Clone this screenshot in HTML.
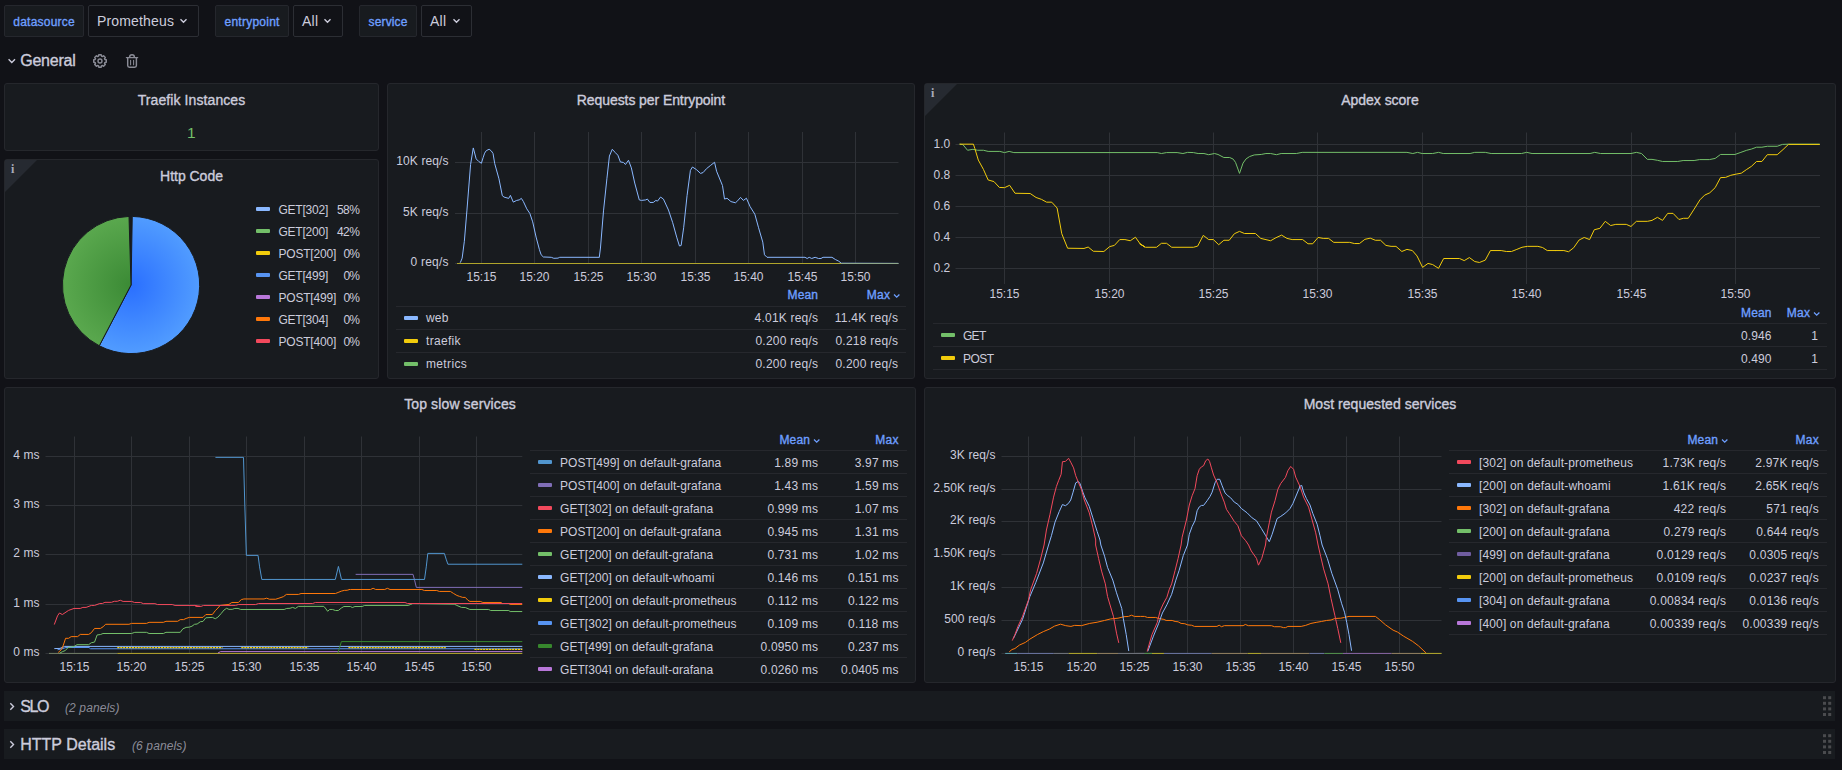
<!DOCTYPE html>
<html lang="en"><head><meta charset="utf-8"><title>Traefik</title><style>
html,body{margin:0;padding:0;background:#111217;}
body{width:1842px;height:770px;position:relative;overflow:hidden;font-family:"Liberation Sans",sans-serif;color:rgb(204,204,220);font-size:12px;}
.t{position:absolute;white-space:pre;}
.p{position:absolute;background:#181b1f;border:1px solid #25272c;border-radius:3px;box-sizing:border-box;}
.b{position:absolute;box-sizing:border-box;}
svg{position:absolute;left:0;top:0;}
</style></head><body>
<div class="b" style="left:4px;top:5px;width:80px;height:32px;background:#181b1f;border:1px solid #25272d;border-radius:2px"></div>
<div class="b" style="left:88px;top:5px;width:111px;height:32px;background:#111217;border:1px solid #2c2e34;border-radius:2px"></div>
<svg width="1842" height="770"><path d="M180.5 19.3 l3 3 l3 -3" fill="none" stroke="rgb(204,204,220)" stroke-width="1.4"/></svg>
<div class="b" style="left:215px;top:5px;width:74px;height:32px;background:#181b1f;border:1px solid #25272d;border-radius:2px"></div>
<div class="b" style="left:293px;top:5px;width:50px;height:32px;background:#111217;border:1px solid #2c2e34;border-radius:2px"></div>
<svg width="1842" height="770"><path d="M324.5 19.3 l3 3 l3 -3" fill="none" stroke="rgb(204,204,220)" stroke-width="1.4"/></svg>
<div class="b" style="left:359px;top:5px;width:58px;height:32px;background:#181b1f;border:1px solid #25272d;border-radius:2px"></div>
<div class="b" style="left:421px;top:5px;width:51px;height:32px;background:#111217;border:1px solid #2c2e34;border-radius:2px"></div>
<svg width="1842" height="770"><path d="M453.5 19.3 l3 3 l3 -3" fill="none" stroke="rgb(204,204,220)" stroke-width="1.4"/></svg>
<svg width="1842" height="770"><path d="M8.6 59.3 l3.2 3.2 l3.2 -3.2" fill="none" stroke="rgb(204,204,220)" stroke-width="1.4"/></svg>
<svg width="1842" height="770"><path d="M98.80 54.76 L101.20 54.76 L101.39 55.99 L102.56 56.48 L103.56 55.74 L105.26 57.44 L104.52 58.44 L105.01 59.61 L106.24 59.80 L106.24 62.20 L105.01 62.39 L104.52 63.56 L105.26 64.56 L103.56 66.26 L102.56 65.52 L101.39 66.01 L101.20 67.24 L98.80 67.24 L98.61 66.01 L97.44 65.52 L96.44 66.26 L94.74 64.56 L95.48 63.56 L94.99 62.39 L93.76 62.20 L93.76 59.80 L94.99 59.61 L95.48 58.44 L94.74 57.44 L96.44 55.74 L97.44 56.48 L98.61 55.99Z" fill="none" stroke="#8a8b96" stroke-width="1.5" stroke-linejoin="round"/><circle cx="100.0" cy="61.0" r="2.0" fill="none" stroke="#8a8b96" stroke-width="1.4"/><g fill="none" stroke="#8a8b96" stroke-width="1.45" stroke-linecap="round" stroke-linejoin="round"><path d="M126.5 57.6 H137.6"/><path d="M129.6 57.3 Q129.6 54.7 132 54.7 Q134.4 54.7 134.4 57.3"/><path d="M127.7 57.8 V65.6 Q127.7 67.3 129.4 67.3 H134.7 Q136.4 67.3 136.4 65.6 V57.8"/><path d="M130.6 60.3 V64.7 M133.6 60.3 V64.7" stroke-width="1.05"/></g></svg>
<div class="p" style="left:4px;top:83px;width:375px;height:68px"></div>
<div class="p" style="left:4px;top:159px;width:375px;height:220px"></div>
<svg width="1842" height="770"><path d="M5 160 h32 l-32 32 z" fill="#262a31"/></svg>
<div class="p" style="left:387px;top:83px;width:528px;height:296px"></div>
<div class="p" style="left:924px;top:83px;width:912px;height:296px"></div>
<svg width="1842" height="770"><path d="M925 84 h32 l-32 32 z" fill="#262a31"/></svg>
<div class="p" style="left:4px;top:387px;width:912px;height:296px"></div>
<div class="p" style="left:924px;top:387px;width:912px;height:296px"></div>
<div class="b" style="left:4px;top:691px;width:1831px;height:30px;background:#181b1f;border-radius:0"></div>
<svg width="1842" height="770"><path d="M10.3 703.3 l3.2 3.2 l-3.2 3.2" fill="none" stroke="rgb(204,204,220)" stroke-width="1.4"/></svg>
<svg width="1842" height="770"><g fill="#4a4b4e"><rect x="1823.0" y="696.2" width="3" height="3"/><rect x="1823.0" y="701.8" width="3" height="3"/><rect x="1823.0" y="707.4" width="3" height="3"/><rect x="1823.0" y="713.0" width="3" height="3"/><rect x="1828.2" y="696.2" width="3" height="3"/><rect x="1828.2" y="701.8" width="3" height="3"/><rect x="1828.2" y="707.4" width="3" height="3"/><rect x="1828.2" y="713.0" width="3" height="3"/></g></svg>
<div class="b" style="left:4px;top:729px;width:1831px;height:30px;background:#181b1f;border-radius:0"></div>
<svg width="1842" height="770"><path d="M10.3 741.3 l3.2 3.2 l-3.2 3.2" fill="none" stroke="rgb(204,204,220)" stroke-width="1.4"/></svg>
<svg width="1842" height="770"><g fill="#4a4b4e"><rect x="1823.0" y="734.2" width="3" height="3"/><rect x="1823.0" y="739.8" width="3" height="3"/><rect x="1823.0" y="745.4" width="3" height="3"/><rect x="1823.0" y="751.0" width="3" height="3"/><rect x="1828.2" y="734.2" width="3" height="3"/><rect x="1828.2" y="739.8" width="3" height="3"/><rect x="1828.2" y="745.4" width="3" height="3"/><rect x="1828.2" y="751.0" width="3" height="3"/></g></svg>
<svg width="1842" height="770"><defs>
<radialGradient id="gb" gradientUnits="userSpaceOnUse" cx="131.1" cy="285.0" r="68.6"><stop offset="0" stop-color="#2a6fff"/><stop offset="1" stop-color="#519cff"/></radialGradient>
<radialGradient id="gg" gradientUnits="userSpaceOnUse" cx="131.1" cy="285.0" r="68.6"><stop offset="0" stop-color="#3b8a35"/><stop offset="1" stop-color="#5aa84e"/></radialGradient></defs>
<path d="M131.05 285.00 L132.25 216.41 A68.60 68.60 0 1 1 99.27 345.79 Z" fill="url(#gb)" stroke="#181b1f" stroke-width="1"/>
<path d="M131.05 285.00 L99.27 345.79 A68.60 68.60 0 0 1 129.01 216.43 Z" fill="url(#gg)" stroke="#181b1f" stroke-width="1"/>
</svg>
<div class="b" style="left:256.0px;top:207.2px;width:14px;height:4px;border-radius:1px;background:#8AB8FF"></div>
<div class="b" style="left:256.0px;top:229.2px;width:14px;height:4px;border-radius:1px;background:#73BF69"></div>
<div class="b" style="left:256.0px;top:251.2px;width:14px;height:4px;border-radius:1px;background:#F2CC0C"></div>
<div class="b" style="left:256.0px;top:273.2px;width:14px;height:4px;border-radius:1px;background:#5794F2"></div>
<div class="b" style="left:256.0px;top:295.2px;width:14px;height:4px;border-radius:1px;background:#B877D9"></div>
<div class="b" style="left:256.0px;top:317.2px;width:14px;height:4px;border-radius:1px;background:#FF780A"></div>
<div class="b" style="left:256.0px;top:339.2px;width:14px;height:4px;border-radius:1px;background:#F2495C"></div>
<svg width="1842" height="770"><g fill="#26282d"><rect x="396" y="306" width="510" height="1"/><rect x="396" y="329" width="510" height="1"/><rect x="396" y="352" width="510" height="1"/></g></svg>
<div class="b" style="left:404.0px;top:316.2px;width:14px;height:4px;border-radius:1px;background:#8AB8FF"></div>
<div class="b" style="left:404.0px;top:339.2px;width:14px;height:4px;border-radius:1px;background:#F2CC0C"></div>
<div class="b" style="left:404.0px;top:362.2px;width:14px;height:4px;border-radius:1px;background:#73BF69"></div>
<svg width="1842" height="770"><path d="M894.0 294.5 l2.7 2.7 l2.7 -2.7" fill="none" stroke="#6e9fff" stroke-width="1.25"/></svg>
<svg width="1842" height="770"><g fill="#26282d"><rect x="933" y="323" width="894" height="1"/><rect x="933" y="346" width="894" height="1"/><rect x="933" y="369" width="894" height="1"/></g></svg>
<div class="b" style="left:941.0px;top:333.2px;width:14px;height:4px;border-radius:1px;background:#73BF69"></div>
<div class="b" style="left:941.0px;top:356.2px;width:14px;height:4px;border-radius:1px;background:#F2CC0C"></div>
<svg width="1842" height="770"><path d="M1814.0 312.5 l2.7 2.7 l2.7 -2.7" fill="none" stroke="#6e9fff" stroke-width="1.25"/></svg>
<svg width="1842" height="770"><g fill="#2f3237"><rect x="481.0" y="132.0" width="1" height="132.0"/><rect x="534.0" y="132.0" width="1" height="132.0"/><rect x="588.0" y="132.0" width="1" height="132.0"/><rect x="641.0" y="132.0" width="1" height="132.0"/><rect x="695.0" y="132.0" width="1" height="132.0"/><rect x="748.0" y="132.0" width="1" height="132.0"/><rect x="802.0" y="132.0" width="1" height="132.0"/><rect x="855.0" y="132.0" width="1" height="132.0"/><rect x="455.0" y="162.0" width="443.5" height="1"/><rect x="455.0" y="213.0" width="443.5" height="1"/><rect x="455.0" y="263.0" width="443.5" height="1"/></g><polyline points="459.28,263.54 460.46,262.36 462.15,258.14 464.35,241.27 466.88,210.89 470.59,164.47 473.29,147.93 476.16,158.90 478.69,161.43 481.39,163.29 483.08,157.72 484.60,153.16 486.29,150.63 489.16,149.28 491.35,150.97 493.04,153.50 494.73,163.63 498.95,178.82 502.32,195.70 504.01,197.05 508.73,198.40 510.42,195.36 513.29,202.11 516.67,200.42 519.20,199.92 521.39,198.40 523.42,201.60 526.79,208.86 529.83,213.42 532.70,221.86 536.08,237.05 539.45,249.70 541.14,254.77 543.33,256.96 551.27,257.30 553.80,258.31 558.02,258.14 559.70,257.30 599.37,257.30 599.28,257.30 600.46,248.02 603.50,210.89 606.88,178.82 609.41,156.03 612.28,149.28 615.32,152.66 617.85,155.19 620.38,161.94 623.42,162.45 625.44,164.47 628.48,160.25 631.35,167.85 634.73,183.04 639.28,199.92 641.48,200.42 645.70,199.92 647.38,199.07 649.92,202.45 653.29,202.45 655.82,200.42 657.51,201.10 660.55,197.05 663.42,199.07 668.48,210.04 672.70,222.70 676.92,237.89 679.45,245.99 681.14,245.49 683.67,227.76 687.05,195.70 690.42,170.38 692.45,167.00 696.33,169.54 700.55,173.42 703.08,172.57 706.46,168.69 710.68,165.32 714.56,162.28 716.58,171.22 722.49,185.57 724.51,199.07 727.05,198.23 730.93,201.60 735.49,202.78 737.68,200.76 740.55,197.38 743.38,200.42 746.41,198.23 750.13,206.67 754.85,214.26 758.57,227.76 762.78,242.11 764.47,254.77 767.00,257.30 804.98,257.30 807.17,258.48 809.20,257.30 811.73,258.48 815.11,257.30 818.48,258.48 821.01,258.48 823.04,257.30 831.98,257.30 835.36,259.49 838.73,261.18 841.27,263.21 898.31,263.38" fill="none" stroke="#8AB8FF" stroke-width="1.0" stroke-linejoin="round" /><rect x="457" y="263" width="384" height="1" fill="#b0a52b"/><rect x="841" y="263" width="57.5" height="1" fill="#8fa88a"/></svg>
<svg width="1842" height="770"><g fill="#2f3237"><rect x="1004.0" y="132.5" width="1" height="151.5"/><rect x="1109.0" y="132.5" width="1" height="151.5"/><rect x="1213.0" y="132.5" width="1" height="151.5"/><rect x="1317.0" y="132.5" width="1" height="151.5"/><rect x="1422.0" y="132.5" width="1" height="151.5"/><rect x="1526.0" y="132.5" width="1" height="151.5"/><rect x="1631.0" y="132.5" width="1" height="151.5"/><rect x="1735.0" y="132.5" width="1" height="151.5"/><rect x="955.5" y="144.0" width="864.5" height="1"/><rect x="955.5" y="175.0" width="864.5" height="1"/><rect x="955.5" y="206.0" width="864.5" height="1"/><rect x="955.5" y="237.0" width="864.5" height="1"/><rect x="955.5" y="268.0" width="864.5" height="1"/></g><polyline points="959.60,144.17 962.88,144.64 967.55,150.25 972.93,149.32 977.61,150.25 983.45,150.25 988.13,151.42 999.82,151.42 1004.49,152.59 1009.17,151.42 1013.85,152.59 1145.01,152.59 1157.21,152.59 1161.42,153.52 1166.56,152.59 1177.09,152.59 1182.93,153.52 1187.61,152.36 1193.45,152.59 1198.13,153.52 1203.97,153.52 1208.65,154.69 1214.49,153.52 1218.00,154.46 1223.85,157.50 1229.69,157.50 1233.20,159.14 1235.54,162.41 1239.51,173.40 1243.02,163.11 1246.06,158.90 1249.57,156.56 1254.24,154.93 1261.26,154.46 1265.93,153.52 1270.61,153.52 1276.45,154.69 1281.13,153.52 1296.33,153.52 1302.17,152.36 1355.01,152.36 1406.96,152.36 1412.80,153.52 1417.48,152.36 1422.16,153.52 1432.68,153.52 1438.52,152.36 1443.20,153.52 1470.09,153.52 1474.76,152.36 1485.29,152.36 1491.13,153.52 1521.53,153.52 1526.67,152.36 1532.05,153.52 1565.01,153.52 1590.07,153.52 1594.75,152.36 1600.59,153.52 1630.99,153.52 1636.37,152.36 1641.51,153.52 1647.35,159.37 1652.03,159.37 1657.41,160.31 1662.55,161.47 1677.75,161.47 1683.13,160.54 1694.12,160.54 1699.49,159.60 1709.31,159.60 1715.16,158.43 1720.54,154.46 1735.03,154.46 1740.88,152.36 1746.72,150.25 1751.40,149.08 1756.54,147.21 1761.92,147.21 1767.30,146.28 1777.20,146.29 1782.35,144.42 1788.43,144.18 1819.78,144.18" fill="none" stroke="#73BF69" stroke-width="1.0" stroke-linejoin="round" /><polyline points="959.60,144.17 973.40,144.17 974.80,148.38 978.31,160.07 983.45,169.42 988.13,179.95 993.97,181.58 999.35,187.43 1004.49,187.66 1009.64,185.32 1015.02,193.27 1030.21,193.51 1036.06,197.48 1041.44,199.35 1046.58,202.16 1051.72,202.16 1057.10,208.00 1061.78,233.72 1067.62,248.22 1083.99,248.45 1088.20,247.05 1093.34,251.26 1103.86,251.49 1109.71,246.58 1114.39,245.41 1119.76,239.57 1124.91,239.57 1130.28,240.74 1135.43,237.23 1140.10,243.77 1145.01,247.05 1139.68,243.77 1145.52,247.28 1156.51,247.28 1161.42,243.31 1166.56,243.31 1171.71,247.28 1193.45,247.28 1197.66,246.11 1203.27,235.36 1208.65,239.57 1213.33,239.57 1218.70,244.71 1223.85,240.27 1229.22,240.27 1234.37,233.72 1239.51,231.38 1244.42,233.49 1255.41,233.49 1260.79,238.40 1270.61,240.74 1275.99,237.70 1281.60,235.12 1286.98,238.40 1292.12,239.57 1302.64,239.57 1308.02,243.77 1312.69,243.77 1318.07,237.46 1323.22,238.40 1328.59,238.40 1333.74,242.37 1348.94,242.37 1349.68,242.37 1354.35,243.54 1359.50,243.54 1364.87,239.33 1370.25,238.16 1375.40,240.27 1380.54,240.27 1385.92,245.41 1391.06,246.35 1395.97,246.35 1401.82,251.49 1406.96,249.39 1412.34,250.56 1417.01,255.93 1422.62,267.39 1428.00,263.41 1432.68,264.58 1438.52,268.32 1443.67,258.50 1459.57,258.50 1464.24,260.61 1469.39,257.57 1474.76,261.54 1479.44,262.48 1485.29,260.14 1490.43,250.56 1501.18,250.56 1506.33,251.49 1511.47,251.49 1516.85,249.39 1521.99,247.28 1527.37,246.35 1537.89,246.35 1542.57,247.52 1547.24,250.56 1555.43,250.56 1555.00,250.56 1563.88,250.56 1568.56,251.72 1573.70,247.75 1579.08,240.03 1584.23,237.46 1589.60,239.57 1594.28,229.75 1599.89,228.34 1605.27,221.33 1610.65,225.54 1615.79,224.37 1626.31,224.37 1630.99,226.47 1636.37,221.33 1647.35,221.33 1652.03,220.39 1657.41,217.35 1662.55,220.39 1667.70,213.38 1673.07,213.38 1678.92,219.46 1683.59,218.29 1688.27,218.29 1694.12,209.17 1699.96,199.82 1704.64,195.14 1709.78,192.80 1715.16,187.66 1720.54,177.61 1725.68,177.37 1730.82,175.27 1736.20,174.10 1741.35,173.16 1746.72,169.42 1751.40,166.38 1756.54,161.47 1761.92,161.47 1767.30,154.69 1777.20,154.71 1783.05,149.56 1788.43,144.42 1819.78,144.42" fill="none" stroke="#F2CC0C" stroke-width="1.0" stroke-linejoin="round" /></svg>
<svg width="1842" height="770"><g fill="#2f3237"><rect x="74.0" y="436.5" width="1" height="217.2"/><rect x="131.0" y="436.5" width="1" height="217.2"/><rect x="189.0" y="436.5" width="1" height="217.2"/><rect x="246.0" y="436.5" width="1" height="217.2"/><rect x="304.0" y="436.5" width="1" height="217.2"/><rect x="361.0" y="436.5" width="1" height="217.2"/><rect x="419.0" y="436.5" width="1" height="217.2"/><rect x="476.0" y="436.5" width="1" height="217.2"/><rect x="45.5" y="456.0" width="476.8" height="1"/><rect x="45.5" y="505.0" width="476.8" height="1"/><rect x="45.5" y="554.0" width="476.8" height="1"/><rect x="45.5" y="604.0" width="476.8" height="1"/><rect x="45.5" y="653.0" width="476.8" height="1"/></g><rect x="49" y="652.9" width="68.3" height="1.1" fill="#6b7762"/><rect x="117.3" y="652.9" width="405" height="1.1" fill="#a99b2c"/><polyline points="218.00,653.00 220.50,651.60 522.30,651.60" fill="none" stroke="#B877D9" stroke-width="1.0" stroke-linejoin="round" /><polyline points="57.50,649.80 62.00,648.80 66.00,647.50 89.00,647.50 90.50,648.75 522.30,648.75" fill="none" stroke="#5794F2" stroke-width="1.0" stroke-linejoin="round" /><polyline points="54.30,648.60 60.00,648.40 64.70,646.40 522.30,646.40" fill="none" stroke="#8AB8FF" stroke-width="1.0" stroke-linejoin="round" /><g stroke="#F2CC0C" stroke-width="1.25" stroke-dasharray="2.2 0.7" fill="none"><path d="M117.3 647.5 H222.5"/><path d="M241.3 647.5 H308.2"/><path d="M348.4 647.5 H445.8"/><path d="M474.4 649.3 H522.3"/></g><polyline points="337.80,653.00 339.40,648.30 341.40,641.60 522.30,641.60" fill="none" stroke="#37872D" stroke-width="1.0" stroke-linejoin="round" /><polyline points="59.48,653.25 62.73,651.56 65.32,650.52 67.92,647.66 74.42,646.36 77.01,644.68 88.70,644.68 91.30,642.73 94.55,642.08 97.14,634.94 100.39,634.55 102.99,633.51 131.56,633.51 134.81,632.34 146.49,632.34 149.09,633.51 163.38,633.51 165.97,632.34 180.26,632.34 182.86,628.83 186.10,627.40 189.35,627.14 191.95,626.23 194.55,624.29 197.14,624.03 200.00,621.95 200.39,621.69 202.99,621.43 205.84,617.79 212.34,617.40 215.32,618.70 217.92,617.14 221.17,613.51 224.03,610.00 226.62,608.31 228.96,609.35 232.21,609.35 234.81,608.44 238.05,608.44 240.65,609.48 284.16,609.48 286.75,608.44 290.00,608.31 292.60,607.40 295.45,608.44 298.44,606.36 323.77,606.36 325.32,608.05 327.66,611.30 329.61,609.48 332.60,609.48 335.45,610.52 338.31,610.52 341.30,608.05 343.90,606.49 350.00,606.49 350.39,606.49 352.34,607.53 354.94,606.49 362.08,606.49 364.68,605.45 408.18,605.45 410.78,604.42 412.73,603.51 454.29,604.16 456.88,605.45 461.43,607.40 465.32,607.53 469.87,609.48 488.70,609.48 490.65,610.52 500.00,610.52 508.83,610.52 510.13,611.56 522.21,611.56" fill="none" stroke="#73BF69" stroke-width="1.0" stroke-linejoin="round" /><polyline points="58.18,652.47 61.43,649.61 63.38,645.06 65.58,638.31 68.57,638.31 71.17,636.62 77.66,636.62 80.26,634.42 88.70,634.42 91.30,632.73 94.55,628.44 100.39,628.44 102.99,626.88 105.58,624.29 128.96,624.29 131.56,623.38 146.49,623.38 149.09,622.34 163.38,622.34 165.97,621.30 177.66,621.30 180.26,619.61 183.51,619.61 186.10,618.44 189.35,617.40 200.00,617.40 202.99,617.40 205.84,614.55 212.34,614.55 215.32,610.65 217.92,608.05 220.13,605.45 228.96,604.42 231.82,602.47 238.31,602.47 241.30,599.61 243.90,598.96 264.03,598.96 266.62,598.18 269.48,599.22 275.71,599.22 278.96,598.18 283.51,596.62 286.36,594.42 298.44,594.42 301.04,593.51 335.45,593.51 338.05,592.47 341.30,591.17 344.29,590.39 347.14,590.26 350.00,589.35 350.39,589.48 370.52,589.48 373.12,588.31 375.71,589.48 384.81,589.48 387.40,588.31 390.00,589.48 421.82,589.48 424.42,590.52 436.75,590.52 439.35,591.43 450.39,591.43 453.64,593.51 456.88,595.45 459.48,596.36 462.73,597.40 465.32,597.40 467.92,600.26 469.87,601.43 480.26,601.43 482.86,602.47 500.00,602.47 501.04,602.47 502.34,603.51 508.83,603.51 510.13,604.42 522.21,604.42" fill="none" stroke="#FF780A" stroke-width="1.0" stroke-linejoin="round" /><polyline points="54.29,624.55 57.53,615.84 59.48,612.99 62.34,614.55 68.57,610.39 74.03,608.44 80.26,608.44 82.86,607.40 86.10,607.40 91.30,605.45 94.55,605.45 99.74,603.51 102.34,603.51 104.94,602.34 111.43,602.34 114.29,601.30 117.27,601.30 120.26,600.26 123.12,601.43 131.56,601.43 134.55,602.47 140.65,602.47 143.25,603.64 154.94,603.64 157.53,604.55 172.21,604.55 175.06,605.45 194.55,605.45 197.14,606.36 200.00,606.36 194.55,605.45 197.14,606.36 201.04,606.36 203.64,605.45 235.45,605.45 238.31,604.55 255.58,604.55 258.57,603.51 312.73,603.51 315.32,602.47 350.00,602.47 404.94,602.47 407.53,603.51 500.00,603.51 522.21,603.51" fill="none" stroke="#F2495C" stroke-width="1.0" stroke-linejoin="round" /><polyline points="355.63,574.37 413.02,574.37 414.57,580.11 416.34,587.40 522.30,587.40" fill="none" stroke="#806EB7" stroke-width="1.0" stroke-linejoin="round" /><polyline points="215.45,457.37 243.49,457.37 244.81,505.06 246.36,555.39 258.06,555.39 259.60,566.87 261.81,579.45 335.32,579.45 338.41,566.42 341.50,579.45 424.50,579.45 426.27,566.87 427.81,553.40 444.37,553.40 446.14,559.14 447.90,564.22 522.30,564.22" fill="none" stroke="#5195CE" stroke-width="1.0" stroke-linejoin="round" /></svg>
<svg width="1842" height="770"><g fill="#26282d"><rect x="530" y="450" width="377" height="1"/><rect x="530" y="473" width="377" height="1"/><rect x="530" y="496" width="377" height="1"/><rect x="530" y="519" width="377" height="1"/><rect x="530" y="542" width="377" height="1"/><rect x="530" y="565" width="377" height="1"/><rect x="530" y="588" width="377" height="1"/><rect x="530" y="611" width="377" height="1"/><rect x="530" y="634" width="377" height="1"/><rect x="530" y="657" width="377" height="1"/><rect x="530" y="680" width="377" height="1"/></g></svg>
<div class="b" style="left:538.0px;top:460.2px;width:14px;height:4px;border-radius:1px;background:#5195CE"></div>
<div class="b" style="left:538.0px;top:483.2px;width:14px;height:4px;border-radius:1px;background:#806EB7"></div>
<div class="b" style="left:538.0px;top:506.2px;width:14px;height:4px;border-radius:1px;background:#F2495C"></div>
<div class="b" style="left:538.0px;top:529.2px;width:14px;height:4px;border-radius:1px;background:#FF780A"></div>
<div class="b" style="left:538.0px;top:552.2px;width:14px;height:4px;border-radius:1px;background:#73BF69"></div>
<div class="b" style="left:538.0px;top:575.2px;width:14px;height:4px;border-radius:1px;background:#8AB8FF"></div>
<div class="b" style="left:538.0px;top:598.2px;width:14px;height:4px;border-radius:1px;background:#F2CC0C"></div>
<div class="b" style="left:538.0px;top:621.2px;width:14px;height:4px;border-radius:1px;background:#5794F2"></div>
<div class="b" style="left:538.0px;top:644.2px;width:14px;height:4px;border-radius:1px;background:#37872D"></div>
<div class="b" style="left:538.0px;top:667.2px;width:14px;height:4px;border-radius:1px;background:#B877D9"></div>
<svg width="1842" height="770"><path d="M814.0 439.5 l2.7 2.7 l2.7 -2.7" fill="none" stroke="#6e9fff" stroke-width="1.25"/></svg>
<svg width="1842" height="770"><g fill="#2f3237"><rect x="1028.0" y="436.5" width="1" height="217.3"/><rect x="1081.0" y="436.5" width="1" height="217.3"/><rect x="1134.0" y="436.5" width="1" height="217.3"/><rect x="1187.0" y="436.5" width="1" height="217.3"/><rect x="1240.0" y="436.5" width="1" height="217.3"/><rect x="1293.0" y="436.5" width="1" height="217.3"/><rect x="1346.0" y="436.5" width="1" height="217.3"/><rect x="1399.0" y="436.5" width="1" height="217.3"/><rect x="1001.5" y="456.0" width="440.0" height="1"/><rect x="1001.5" y="489.0" width="440.0" height="1"/><rect x="1001.5" y="521.0" width="440.0" height="1"/><rect x="1001.5" y="554.0" width="440.0" height="1"/><rect x="1001.5" y="587.0" width="440.0" height="1"/><rect x="1001.5" y="620.0" width="440.0" height="1"/><rect x="1001.5" y="653.0" width="440.0" height="1"/></g><rect x="1005.2" y="652.9" width="12.0" height="1.1" fill="#5a9aa8"/><rect x="1017.2" y="652.9" width="36.6" height="1.1" fill="#66709a"/><rect x="1053.8" y="652.9" width="14.9" height="1.1" fill="#6c7078"/><rect x="1068.7" y="652.9" width="28.4" height="1.1" fill="#a9a02c"/><rect x="1097.1" y="652.9" width="20.9" height="1.1" fill="#8a7a5c"/><rect x="1118.0" y="652.9" width="26.9" height="1.1" fill="#6c7078"/><rect x="1144.9" y="652.9" width="7.5" height="1.1" fill="#4f8a4a"/><rect x="1135.5" y="652.9" width="9.0" height="1.1" fill="#6c7078"/><rect x="1144.5" y="652.9" width="7.5" height="1.1" fill="#4f8a4a"/><rect x="1152.0" y="652.9" width="12.0" height="1.1" fill="#a9a02c"/><rect x="1163.9" y="652.9" width="47.8" height="1.1" fill="#66709a"/><rect x="1211.7" y="652.9" width="35.9" height="1.1" fill="#8a7a5c"/><rect x="1247.6" y="652.9" width="13.4" height="1.1" fill="#a9a02c"/><rect x="1261.0" y="652.9" width="29.0" height="1.1" fill="#8a7a5c"/><rect x="1290.0" y="652.9" width="19.4" height="1.1" fill="#8a7a5c"/><rect x="1309.4" y="652.9" width="14.9" height="1.1" fill="#66709a"/><rect x="1324.4" y="652.9" width="18.7" height="1.1" fill="#4f8a4a"/><rect x="1343.0" y="652.9" width="48.6" height="1.1" fill="#80609a"/><rect x="1391.6" y="652.9" width="29.1" height="1.1" fill="#8a7a5c"/><rect x="1420.7" y="652.9" width="20.9" height="1.1" fill="#a9a02c"/><polyline points="1009.26,651.81 1011.95,649.57 1014.94,648.53 1019.42,645.09 1025.40,642.40 1029.88,639.11 1037.35,634.63 1043.32,631.64 1049.30,629.11 1054.53,626.12 1060.50,624.18 1065.73,625.67 1070.96,626.42 1074.69,625.37 1081.42,625.67 1089.63,623.43 1097.10,622.23 1104.57,620.44 1110.55,618.95 1118.02,618.20 1123.99,616.71 1128.47,616.41 1131.46,615.21 1134.45,616.41 1140.42,616.41 1144.48,616.41 1147.47,617.45 1155.69,617.45 1158.67,618.50 1163.90,619.39 1166.14,620.44 1172.12,620.44 1175.11,621.49 1178.09,621.79 1181.08,623.43 1184.82,623.73 1187.80,624.92 1191.54,625.22 1194.53,626.42 1216.93,626.42 1219.18,625.22 1221.42,626.71 1224.40,625.67 1243.08,625.67 1245.32,624.47 1248.31,625.67 1271.46,625.67 1274.45,626.71 1280.42,626.71 1283.41,627.61 1285.65,627.61 1287.89,626.42 1290.00,626.42 1301.20,626.42 1305.69,625.37 1310.91,623.43 1316.14,622.38 1321.37,621.49 1326.60,620.44 1331.08,619.99 1334.82,618.50 1340.79,618.20 1344.53,617.45 1349.01,616.41 1375.45,616.41 1379.63,619.69 1385.61,624.92 1393.08,630.15 1397.56,632.09 1403.53,636.13 1412.50,641.35 1418.47,645.84 1425.94,652.86" fill="none" stroke="#FF780A" stroke-width="1.0" stroke-linejoin="round" /><polyline points="1013.44,638.37 1022.41,619.69 1029.88,596.54 1035.85,582.35 1043.32,562.93 1048.55,545.00 1051.43,535.71 1055.00,522.14 1059.29,511.43 1062.43,504.57 1065.43,505.71 1068.29,503.57 1070.71,500.00 1072.86,492.86 1075.71,482.86 1078.29,481.43 1080.00,483.57 1082.86,492.14 1085.00,497.86 1089.29,506.43 1092.86,517.86 1097.14,531.43 1100.00,540.00 1100.84,545.00 1104.57,556.20 1107.56,567.41 1112.79,580.11 1116.52,592.80 1121.75,608.49 1123.24,618.20 1126.23,634.63 1128.77,651.07" fill="none" stroke="#8AB8FF" stroke-width="1.0" stroke-linejoin="round" /><polyline points="1147.77,651.36 1153.44,636.13 1158.67,623.43 1162.41,612.97 1166.89,604.76 1171.67,594.30 1175.85,580.11 1179.14,570.40 1183.32,555.46 1187.51,545.00 1189.29,534.29 1192.14,526.43 1195.00,520.71 1197.14,510.71 1199.29,506.86 1201.43,505.43 1203.57,505.43 1207.14,500.71 1210.00,496.43 1212.14,492.14 1215.00,482.86 1217.14,479.29 1219.71,479.29 1222.14,485.71 1225.00,492.86 1227.86,495.71 1230.71,497.86 1234.29,502.14 1237.86,504.29 1241.43,508.57 1247.14,512.86 1252.14,517.86 1256.43,520.71 1261.43,528.57 1265.71,535.71 1269.29,541.71 1272.14,534.29 1277.14,518.57 1280.71,516.43 1285.71,512.86 1290.00,508.57 1292.86,503.57 1296.43,495.00 1300.00,486.43 1299.29,486.43 1301.71,485.43 1303.57,492.14 1306.43,498.57 1310.00,505.00 1312.86,513.57 1317.14,524.29 1320.00,535.71 1322.12,545.00 1327.35,558.44 1331.83,573.38 1337.80,589.82 1341.54,603.26 1344.53,612.22 1346.77,622.68 1349.01,634.63 1351.55,650.77" fill="none" stroke="#8AB8FF" stroke-width="1.0" stroke-linejoin="round" /><polyline points="1012.25,640.61 1014.94,634.63 1017.93,626.42 1022.41,616.71 1028.38,600.27 1030.62,589.82 1036.60,573.38 1040.33,559.94 1044.07,545.00 1046.43,530.00 1050.00,514.29 1053.57,497.14 1056.43,486.43 1058.57,480.71 1061.14,474.29 1062.43,461.71 1065.43,461.43 1068.57,458.29 1070.71,462.14 1073.57,467.86 1075.71,475.71 1078.29,482.14 1081.43,489.29 1084.29,500.00 1089.29,512.86 1092.86,527.14 1095.71,540.00 1095.61,545.00 1098.60,558.44 1101.58,571.14 1105.32,583.84 1107.56,596.54 1113.53,616.71 1116.52,633.14 1118.76,642.85" fill="none" stroke="#F2495C" stroke-width="1.0" stroke-linejoin="round" /><polyline points="1147.17,651.36 1151.95,634.63 1157.18,622.68 1160.17,610.73 1163.16,604.01 1166.89,597.29 1169.13,589.82 1171.67,583.84 1175.11,570.40 1178.09,558.44 1181.08,545.00 1182.14,537.14 1186.43,520.00 1189.29,505.00 1192.14,495.71 1195.00,488.57 1197.14,475.71 1199.29,469.29 1201.43,466.86 1203.57,465.71 1205.71,460.71 1207.86,459.00 1209.57,461.43 1211.43,467.86 1213.57,475.00 1217.14,482.86 1221.43,495.00 1224.29,502.14 1226.43,509.29 1229.29,513.57 1234.29,521.43 1237.86,525.71 1241.43,535.71 1245.71,540.71 1248.57,545.00 1251.29,550.98 1256.52,558.44 1258.46,565.17 1261.75,558.44 1265.49,545.00 1266.43,537.14 1269.29,522.86 1271.43,512.14 1275.00,500.71 1277.86,489.29 1280.71,483.57 1285.43,477.43 1287.86,470.71 1290.71,466.43 1293.57,469.29 1295.71,477.14 1295.71,477.14 1300.00,486.43 1303.57,497.14 1308.57,507.14 1312.14,520.00 1315.71,532.86 1318.08,545.00 1320.62,556.20 1323.61,568.90 1328.09,583.84 1331.08,598.78 1334.82,615.21 1337.80,628.66 1340.79,642.85" fill="none" stroke="#F2495C" stroke-width="1.0" stroke-linejoin="round" /></svg>
<svg width="1842" height="770"><g fill="#26282d"><rect x="1449" y="450" width="378" height="1"/><rect x="1449" y="473" width="378" height="1"/><rect x="1449" y="496" width="378" height="1"/><rect x="1449" y="519" width="378" height="1"/><rect x="1449" y="542" width="378" height="1"/><rect x="1449" y="565" width="378" height="1"/><rect x="1449" y="588" width="378" height="1"/><rect x="1449" y="611" width="378" height="1"/><rect x="1449" y="634" width="378" height="1"/></g></svg>
<div class="b" style="left:1457.0px;top:460.2px;width:14px;height:4px;border-radius:1px;background:#F2495C"></div>
<div class="b" style="left:1457.0px;top:483.2px;width:14px;height:4px;border-radius:1px;background:#8AB8FF"></div>
<div class="b" style="left:1457.0px;top:506.2px;width:14px;height:4px;border-radius:1px;background:#FF780A"></div>
<div class="b" style="left:1457.0px;top:529.2px;width:14px;height:4px;border-radius:1px;background:#73BF69"></div>
<div class="b" style="left:1457.0px;top:552.2px;width:14px;height:4px;border-radius:1px;background:#705DA0"></div>
<div class="b" style="left:1457.0px;top:575.2px;width:14px;height:4px;border-radius:1px;background:#F2CC0C"></div>
<div class="b" style="left:1457.0px;top:598.2px;width:14px;height:4px;border-radius:1px;background:#5794F2"></div>
<div class="b" style="left:1457.0px;top:621.2px;width:14px;height:4px;border-radius:1px;background:#B877D9"></div>
<svg width="1842" height="770"><path d="M1722.0 439.5 l2.7 2.7 l2.7 -2.7" fill="none" stroke="#6e9fff" stroke-width="1.25"/></svg>
<div class="t" style="top:13.80px;font-size:12px;line-height:16px;color:#6e9fff;letter-spacing:0.221px;left:44.00px;width:101.59px;margin-left:-50.79px;text-align:center;text-indent:0.221px;-webkit-text-stroke:0.35px #6e9fff;">datasource</div>
<div class="t" style="top:12.60px;font-size:14px;line-height:16px;color:rgb(204,204,220);letter-spacing:0.164px;left:97.00px;">Prometheus</div>
<div class="t" style="top:13.80px;font-size:12px;line-height:16px;color:#6e9fff;letter-spacing:0.246px;left:252.00px;width:95.17px;margin-left:-47.58px;text-align:center;text-indent:0.246px;-webkit-text-stroke:0.35px #6e9fff;">entrypoint</div>
<div class="t" style="top:12.60px;font-size:14px;line-height:16px;color:rgb(204,204,220);letter-spacing:0.247px;left:302.00px;">All</div>
<div class="t" style="top:13.80px;font-size:12px;line-height:16px;color:#6e9fff;letter-spacing:0.143px;left:388.00px;width:79.02px;margin-left:-39.51px;text-align:center;text-indent:0.143px;-webkit-text-stroke:0.35px #6e9fff;">service</div>
<div class="t" style="top:12.60px;font-size:14px;line-height:16px;color:rgb(204,204,220);letter-spacing:0.247px;left:430.00px;">All</div>
<div class="t" style="top:52.60px;font-size:16px;line-height:16px;color:rgb(204,204,220);letter-spacing:-0.220px;left:20.20px;-webkit-text-stroke:0.35px rgb(204,204,220);">General</div>
<div class="t" style="top:92.00px;font-size:14px;line-height:16px;color:rgb(204,204,220);letter-spacing:0.087px;left:191.50px;width:147.57px;margin-left:-73.79px;text-align:center;text-indent:0.087px;-webkit-text-stroke:0.35px rgb(204,204,220);">Traefik Instances</div>
<div class="t" style="top:168.00px;font-size:14px;line-height:16px;color:rgb(204,204,220);letter-spacing:-0.021px;left:191.50px;width:102.86px;margin-left:-51.43px;text-align:center;text-indent:-0.021px;-webkit-text-stroke:0.35px rgb(204,204,220);">Http Code</div>
<div class="t" style="top:160.80px;font-size:12px;line-height:16px;color:rgb(170,172,186);letter-spacing:0.928px;left:12.60px;width:43.60px;margin-left:-21.80px;text-align:center;text-indent:0.928px;font-family:'Liberation Serif',serif;font-weight:bold;">i</div>
<div class="t" style="top:92.00px;font-size:14px;line-height:16px;color:rgb(204,204,220);letter-spacing:-0.086px;left:651.00px;width:188.23px;margin-left:-94.12px;text-align:center;text-indent:-0.086px;-webkit-text-stroke:0.35px rgb(204,204,220);">Requests per Entrypoint</div>
<div class="t" style="top:92.00px;font-size:14px;line-height:16px;color:rgb(204,204,220);letter-spacing:-0.040px;left:1380.00px;width:117.39px;margin-left:-58.69px;text-align:center;text-indent:-0.040px;-webkit-text-stroke:0.35px rgb(204,204,220);">Apdex score</div>
<div class="t" style="top:84.80px;font-size:12px;line-height:16px;color:rgb(170,172,186);letter-spacing:0.928px;left:932.60px;width:43.60px;margin-left:-21.80px;text-align:center;text-indent:0.928px;font-family:'Liberation Serif',serif;font-weight:bold;">i</div>
<div class="t" style="top:396.00px;font-size:14px;line-height:16px;color:rgb(204,204,220);letter-spacing:0.121px;left:460.00px;width:151.76px;margin-left:-75.88px;text-align:center;text-indent:0.121px;-webkit-text-stroke:0.35px rgb(204,204,220);">Top slow services</div>
<div class="t" style="top:396.00px;font-size:14px;line-height:16px;color:rgb(204,204,220);letter-spacing:0.046px;left:1380.00px;width:192.80px;margin-left:-96.40px;text-align:center;text-indent:0.046px;-webkit-text-stroke:0.35px rgb(204,204,220);">Most requested services</div>
<div class="t" style="top:124.60px;font-size:15.5px;line-height:16px;color:#73BF69;letter-spacing:0.204px;left:191.30px;width:48.83px;margin-left:-24.41px;text-align:center;text-indent:0.204px;">1</div>
<div class="t" style="top:698.60px;font-size:16px;line-height:16px;color:rgb(204,204,220);letter-spacing:-1.372px;left:20.20px;-webkit-text-stroke:0.35px rgb(204,204,220);">SLO</div>
<div class="t" style="top:699.60px;font-size:12px;line-height:16px;color:rgba(204,204,220,0.65);letter-spacing:0.120px;left:65.00px;font-style:italic;">(2 panels)</div>
<div class="t" style="top:736.60px;font-size:16px;line-height:16px;color:rgb(204,204,220);letter-spacing:0.015px;left:20.20px;-webkit-text-stroke:0.35px rgb(204,204,220);">HTTP Details</div>
<div class="t" style="top:737.60px;font-size:12px;line-height:16px;color:rgba(204,204,220,0.65);letter-spacing:0.120px;left:132.00px;font-style:italic;">(6 panels)</div>
<div class="t" style="top:201.50px;font-size:12px;line-height:16px;color:rgb(204,204,220);letter-spacing:-0.203px;left:278.40px;">GET[302]</div>
<div class="t" style="top:201.50px;font-size:12px;line-height:16px;color:rgb(204,204,220);letter-spacing:-0.464px;right:1482.46px;">58%</div>
<div class="t" style="top:223.50px;font-size:12px;line-height:16px;color:rgb(204,204,220);letter-spacing:-0.203px;left:278.40px;">GET[200]</div>
<div class="t" style="top:223.50px;font-size:12px;line-height:16px;color:rgb(204,204,220);letter-spacing:-0.464px;right:1482.46px;">42%</div>
<div class="t" style="top:245.50px;font-size:12px;line-height:16px;color:rgb(204,204,220);letter-spacing:-0.175px;left:278.40px;">POST[200]</div>
<div class="t" style="top:245.50px;font-size:12px;line-height:16px;color:rgb(204,204,220);letter-spacing:-0.783px;right:1482.78px;">0%</div>
<div class="t" style="top:267.50px;font-size:12px;line-height:16px;color:rgb(204,204,220);letter-spacing:-0.203px;left:278.40px;">GET[499]</div>
<div class="t" style="top:267.50px;font-size:12px;line-height:16px;color:rgb(204,204,220);letter-spacing:-0.783px;right:1482.78px;">0%</div>
<div class="t" style="top:289.50px;font-size:12px;line-height:16px;color:rgb(204,204,220);letter-spacing:-0.175px;left:278.40px;">POST[499]</div>
<div class="t" style="top:289.50px;font-size:12px;line-height:16px;color:rgb(204,204,220);letter-spacing:-0.783px;right:1482.78px;">0%</div>
<div class="t" style="top:311.50px;font-size:12px;line-height:16px;color:rgb(204,204,220);letter-spacing:-0.203px;left:278.40px;">GET[304]</div>
<div class="t" style="top:311.50px;font-size:12px;line-height:16px;color:rgb(204,204,220);letter-spacing:-0.783px;right:1482.78px;">0%</div>
<div class="t" style="top:333.50px;font-size:12px;line-height:16px;color:rgb(204,204,220);letter-spacing:-0.175px;left:278.40px;">POST[400]</div>
<div class="t" style="top:333.50px;font-size:12px;line-height:16px;color:rgb(204,204,220);letter-spacing:-0.783px;right:1482.78px;">0%</div>
<div class="t" style="top:310.00px;font-size:12px;line-height:16px;color:rgb(204,204,220);letter-spacing:0.156px;left:426.00px;">web</div>
<div class="t" style="top:310.00px;font-size:12px;line-height:16px;color:rgb(204,204,220);letter-spacing:0.203px;right:1023.80px;">4.01K req/s</div>
<div class="t" style="top:310.00px;font-size:12px;line-height:16px;color:rgb(204,204,220);letter-spacing:0.284px;right:943.72px;">11.4K req/s</div>
<div class="t" style="top:333.00px;font-size:12px;line-height:16px;color:rgb(204,204,220);letter-spacing:0.316px;left:426.00px;">traefik</div>
<div class="t" style="top:333.00px;font-size:12px;line-height:16px;color:rgb(204,204,220);letter-spacing:0.253px;right:1023.75px;">0.200 req/s</div>
<div class="t" style="top:333.00px;font-size:12px;line-height:16px;color:rgb(204,204,220);letter-spacing:0.253px;right:943.75px;">0.218 req/s</div>
<div class="t" style="top:356.00px;font-size:12px;line-height:16px;color:rgb(204,204,220);letter-spacing:0.348px;left:426.00px;">metrics</div>
<div class="t" style="top:356.00px;font-size:12px;line-height:16px;color:rgb(204,204,220);letter-spacing:0.253px;right:1023.75px;">0.200 req/s</div>
<div class="t" style="top:356.00px;font-size:12px;line-height:16px;color:rgb(204,204,220);letter-spacing:0.253px;right:943.75px;">0.200 req/s</div>
<div class="t" style="top:286.80px;font-size:12px;line-height:16px;color:#6e9fff;letter-spacing:0.138px;right:1023.86px;-webkit-text-stroke:0.35px #6e9fff;">Mean</div>
<div class="t" style="top:286.80px;font-size:12px;line-height:16px;color:#6e9fff;letter-spacing:0.243px;right:951.86px;-webkit-text-stroke:0.35px #6e9fff;">Max</div>
<div class="t" style="top:328.00px;font-size:12px;line-height:16px;color:rgb(204,204,220);letter-spacing:-0.714px;left:963.00px;">GET</div>
<div class="t" style="top:328.00px;font-size:12px;line-height:16px;color:rgb(204,204,220);letter-spacing:0.141px;right:70.36px;">0.946</div>
<div class="t" style="top:328.00px;font-size:12px;line-height:16px;color:rgb(204,204,220);letter-spacing:0.176px;right:23.82px;">1</div>
<div class="t" style="top:351.00px;font-size:12px;line-height:16px;color:rgb(204,204,220);letter-spacing:-0.518px;left:963.00px;">POST</div>
<div class="t" style="top:351.00px;font-size:12px;line-height:16px;color:rgb(204,204,220);letter-spacing:0.141px;right:70.36px;">0.490</div>
<div class="t" style="top:351.00px;font-size:12px;line-height:16px;color:rgb(204,204,220);letter-spacing:0.176px;right:23.82px;">1</div>
<div class="t" style="top:304.80px;font-size:12px;line-height:16px;color:#6e9fff;letter-spacing:0.138px;right:70.36px;-webkit-text-stroke:0.35px #6e9fff;">Mean</div>
<div class="t" style="top:304.80px;font-size:12px;line-height:16px;color:#6e9fff;letter-spacing:0.243px;right:31.86px;-webkit-text-stroke:0.35px #6e9fff;">Max</div>
<div class="t" style="top:153.30px;font-size:12px;line-height:16px;color:rgb(204,204,220);letter-spacing:0.107px;right:1393.39px;">10K req/s</div>
<div class="t" style="top:204.20px;font-size:12px;line-height:16px;color:rgb(204,204,220);letter-spacing:0.113px;right:1393.39px;">5K req/s</div>
<div class="t" style="top:254.30px;font-size:12px;line-height:16px;color:rgb(204,204,220);letter-spacing:0.199px;right:1393.30px;">0 req/s</div>
<div class="t" style="top:268.60px;font-size:12px;line-height:16px;color:rgb(204,204,220);letter-spacing:-0.034px;left:481.50px;width:69.86px;margin-left:-34.93px;text-align:center;text-indent:-0.034px;">15:15</div>
<div class="t" style="top:268.60px;font-size:12px;line-height:16px;color:rgb(204,204,220);letter-spacing:-0.034px;left:534.50px;width:69.86px;margin-left:-34.93px;text-align:center;text-indent:-0.034px;">15:20</div>
<div class="t" style="top:268.60px;font-size:12px;line-height:16px;color:rgb(204,204,220);letter-spacing:-0.034px;left:588.50px;width:69.86px;margin-left:-34.93px;text-align:center;text-indent:-0.034px;">15:25</div>
<div class="t" style="top:268.60px;font-size:12px;line-height:16px;color:rgb(204,204,220);letter-spacing:-0.034px;left:641.50px;width:69.86px;margin-left:-34.93px;text-align:center;text-indent:-0.034px;">15:30</div>
<div class="t" style="top:268.60px;font-size:12px;line-height:16px;color:rgb(204,204,220);letter-spacing:-0.034px;left:695.50px;width:69.86px;margin-left:-34.93px;text-align:center;text-indent:-0.034px;">15:35</div>
<div class="t" style="top:268.60px;font-size:12px;line-height:16px;color:rgb(204,204,220);letter-spacing:-0.034px;left:748.50px;width:69.86px;margin-left:-34.93px;text-align:center;text-indent:-0.034px;">15:40</div>
<div class="t" style="top:268.60px;font-size:12px;line-height:16px;color:rgb(204,204,220);letter-spacing:-0.034px;left:802.50px;width:69.86px;margin-left:-34.93px;text-align:center;text-indent:-0.034px;">15:45</div>
<div class="t" style="top:268.60px;font-size:12px;line-height:16px;color:rgb(204,204,220);letter-spacing:-0.034px;left:855.50px;width:69.86px;margin-left:-34.93px;text-align:center;text-indent:-0.034px;">15:50</div>
<div class="t" style="top:135.60px;font-size:12px;line-height:16px;color:rgb(204,204,220);letter-spacing:-0.018px;left:933.60px;">1.0</div>
<div class="t" style="top:166.70px;font-size:12px;line-height:16px;color:rgb(204,204,220);letter-spacing:-0.018px;left:933.60px;">0.8</div>
<div class="t" style="top:197.80px;font-size:12px;line-height:16px;color:rgb(204,204,220);letter-spacing:-0.018px;left:933.60px;">0.6</div>
<div class="t" style="top:228.90px;font-size:12px;line-height:16px;color:rgb(204,204,220);letter-spacing:-0.018px;left:933.60px;">0.4</div>
<div class="t" style="top:259.80px;font-size:12px;line-height:16px;color:rgb(204,204,220);letter-spacing:-0.018px;left:933.60px;">0.2</div>
<div class="t" style="top:286.20px;font-size:12px;line-height:16px;color:rgb(204,204,220);letter-spacing:-0.034px;left:1004.50px;width:69.86px;margin-left:-34.93px;text-align:center;text-indent:-0.034px;">15:15</div>
<div class="t" style="top:286.20px;font-size:12px;line-height:16px;color:rgb(204,204,220);letter-spacing:-0.034px;left:1109.50px;width:69.86px;margin-left:-34.93px;text-align:center;text-indent:-0.034px;">15:20</div>
<div class="t" style="top:286.20px;font-size:12px;line-height:16px;color:rgb(204,204,220);letter-spacing:-0.034px;left:1213.50px;width:69.86px;margin-left:-34.93px;text-align:center;text-indent:-0.034px;">15:25</div>
<div class="t" style="top:286.20px;font-size:12px;line-height:16px;color:rgb(204,204,220);letter-spacing:-0.034px;left:1317.50px;width:69.86px;margin-left:-34.93px;text-align:center;text-indent:-0.034px;">15:30</div>
<div class="t" style="top:286.20px;font-size:12px;line-height:16px;color:rgb(204,204,220);letter-spacing:-0.034px;left:1422.50px;width:69.86px;margin-left:-34.93px;text-align:center;text-indent:-0.034px;">15:35</div>
<div class="t" style="top:286.20px;font-size:12px;line-height:16px;color:rgb(204,204,220);letter-spacing:-0.034px;left:1526.50px;width:69.86px;margin-left:-34.93px;text-align:center;text-indent:-0.034px;">15:40</div>
<div class="t" style="top:286.20px;font-size:12px;line-height:16px;color:rgb(204,204,220);letter-spacing:-0.034px;left:1631.50px;width:69.86px;margin-left:-34.93px;text-align:center;text-indent:-0.034px;">15:45</div>
<div class="t" style="top:286.20px;font-size:12px;line-height:16px;color:rgb(204,204,220);letter-spacing:-0.034px;left:1735.50px;width:69.86px;margin-left:-34.93px;text-align:center;text-indent:-0.034px;">15:50</div>
<div class="t" style="top:447.10px;font-size:12px;line-height:16px;color:rgb(204,204,220);letter-spacing:0.100px;right:1802.40px;">4 ms</div>
<div class="t" style="top:496.30px;font-size:12px;line-height:16px;color:rgb(204,204,220);letter-spacing:0.100px;right:1802.40px;">3 ms</div>
<div class="t" style="top:545.10px;font-size:12px;line-height:16px;color:rgb(204,204,220);letter-spacing:0.100px;right:1802.40px;">2 ms</div>
<div class="t" style="top:594.80px;font-size:12px;line-height:16px;color:rgb(204,204,220);letter-spacing:0.100px;right:1802.40px;">1 ms</div>
<div class="t" style="top:644.00px;font-size:12px;line-height:16px;color:rgb(204,204,220);letter-spacing:0.100px;right:1802.40px;">0 ms</div>
<div class="t" style="top:659.10px;font-size:12px;line-height:16px;color:rgb(204,204,220);letter-spacing:-0.034px;left:74.50px;width:69.86px;margin-left:-34.93px;text-align:center;text-indent:-0.034px;">15:15</div>
<div class="t" style="top:659.10px;font-size:12px;line-height:16px;color:rgb(204,204,220);letter-spacing:-0.034px;left:131.50px;width:69.86px;margin-left:-34.93px;text-align:center;text-indent:-0.034px;">15:20</div>
<div class="t" style="top:659.10px;font-size:12px;line-height:16px;color:rgb(204,204,220);letter-spacing:-0.034px;left:189.50px;width:69.86px;margin-left:-34.93px;text-align:center;text-indent:-0.034px;">15:25</div>
<div class="t" style="top:659.10px;font-size:12px;line-height:16px;color:rgb(204,204,220);letter-spacing:-0.034px;left:246.50px;width:69.86px;margin-left:-34.93px;text-align:center;text-indent:-0.034px;">15:30</div>
<div class="t" style="top:659.10px;font-size:12px;line-height:16px;color:rgb(204,204,220);letter-spacing:-0.034px;left:304.50px;width:69.86px;margin-left:-34.93px;text-align:center;text-indent:-0.034px;">15:35</div>
<div class="t" style="top:659.10px;font-size:12px;line-height:16px;color:rgb(204,204,220);letter-spacing:-0.034px;left:361.50px;width:69.86px;margin-left:-34.93px;text-align:center;text-indent:-0.034px;">15:40</div>
<div class="t" style="top:659.10px;font-size:12px;line-height:16px;color:rgb(204,204,220);letter-spacing:-0.034px;left:419.50px;width:69.86px;margin-left:-34.93px;text-align:center;text-indent:-0.034px;">15:45</div>
<div class="t" style="top:659.10px;font-size:12px;line-height:16px;color:rgb(204,204,220);letter-spacing:-0.034px;left:476.50px;width:69.86px;margin-left:-34.93px;text-align:center;text-indent:-0.034px;">15:50</div>
<div class="t" style="top:454.75px;font-size:12px;line-height:16px;color:rgb(204,204,220);letter-spacing:0.043px;left:560.00px;">POST[499] on default-grafana</div>
<div class="t" style="top:454.75px;font-size:12px;line-height:16px;color:rgb(204,204,220);letter-spacing:0.177px;right:1023.82px;">1.89 ms</div>
<div class="t" style="top:454.75px;font-size:12px;line-height:16px;color:rgb(204,204,220);letter-spacing:0.177px;right:943.32px;">3.97 ms</div>
<div class="t" style="top:477.75px;font-size:12px;line-height:16px;color:rgb(204,204,220);letter-spacing:0.043px;left:560.00px;">POST[400] on default-grafana</div>
<div class="t" style="top:477.75px;font-size:12px;line-height:16px;color:rgb(204,204,220);letter-spacing:0.177px;right:1023.82px;">1.43 ms</div>
<div class="t" style="top:477.75px;font-size:12px;line-height:16px;color:rgb(204,204,220);letter-spacing:0.177px;right:943.32px;">1.59 ms</div>
<div class="t" style="top:500.75px;font-size:12px;line-height:16px;color:rgb(204,204,220);letter-spacing:0.042px;left:560.00px;">GET[302] on default-grafana</div>
<div class="t" style="top:500.75px;font-size:12px;line-height:16px;color:rgb(204,204,220);letter-spacing:0.178px;right:1023.82px;">0.999 ms</div>
<div class="t" style="top:500.75px;font-size:12px;line-height:16px;color:rgb(204,204,220);letter-spacing:0.177px;right:943.32px;">1.07 ms</div>
<div class="t" style="top:523.75px;font-size:12px;line-height:16px;color:rgb(204,204,220);letter-spacing:0.043px;left:560.00px;">POST[200] on default-grafana</div>
<div class="t" style="top:523.75px;font-size:12px;line-height:16px;color:rgb(204,204,220);letter-spacing:0.178px;right:1023.82px;">0.945 ms</div>
<div class="t" style="top:523.75px;font-size:12px;line-height:16px;color:rgb(204,204,220);letter-spacing:0.177px;right:943.32px;">1.31 ms</div>
<div class="t" style="top:546.75px;font-size:12px;line-height:16px;color:rgb(204,204,220);letter-spacing:0.042px;left:560.00px;">GET[200] on default-grafana</div>
<div class="t" style="top:546.75px;font-size:12px;line-height:16px;color:rgb(204,204,220);letter-spacing:0.178px;right:1023.82px;">0.731 ms</div>
<div class="t" style="top:546.75px;font-size:12px;line-height:16px;color:rgb(204,204,220);letter-spacing:0.177px;right:943.32px;">1.02 ms</div>
<div class="t" style="top:569.75px;font-size:12px;line-height:16px;color:rgb(204,204,220);letter-spacing:0.063px;left:560.00px;">GET[200] on default-whoami</div>
<div class="t" style="top:569.75px;font-size:12px;line-height:16px;color:rgb(204,204,220);letter-spacing:0.178px;right:1023.82px;">0.146 ms</div>
<div class="t" style="top:569.75px;font-size:12px;line-height:16px;color:rgb(204,204,220);letter-spacing:0.178px;right:943.32px;">0.151 ms</div>
<div class="t" style="top:592.75px;font-size:12px;line-height:16px;color:rgb(204,204,220);letter-spacing:0.063px;left:560.00px;">GET[200] on default-prometheus</div>
<div class="t" style="top:592.75px;font-size:12px;line-height:16px;color:rgb(204,204,220);letter-spacing:0.290px;right:1023.71px;">0.112 ms</div>
<div class="t" style="top:592.75px;font-size:12px;line-height:16px;color:rgb(204,204,220);letter-spacing:0.178px;right:943.32px;">0.122 ms</div>
<div class="t" style="top:615.75px;font-size:12px;line-height:16px;color:rgb(204,204,220);letter-spacing:0.063px;left:560.00px;">GET[302] on default-prometheus</div>
<div class="t" style="top:615.75px;font-size:12px;line-height:16px;color:rgb(204,204,220);letter-spacing:0.178px;right:1023.82px;">0.109 ms</div>
<div class="t" style="top:615.75px;font-size:12px;line-height:16px;color:rgb(204,204,220);letter-spacing:0.290px;right:943.21px;">0.118 ms</div>
<div class="t" style="top:638.75px;font-size:12px;line-height:16px;color:rgb(204,204,220);letter-spacing:0.042px;left:560.00px;">GET[499] on default-grafana</div>
<div class="t" style="top:638.75px;font-size:12px;line-height:16px;color:rgb(204,204,220);letter-spacing:0.178px;right:1023.82px;">0.0950 ms</div>
<div class="t" style="top:638.75px;font-size:12px;line-height:16px;color:rgb(204,204,220);letter-spacing:0.178px;right:943.32px;">0.237 ms</div>
<div class="t" style="top:661.75px;font-size:12px;line-height:16px;color:rgb(204,204,220);letter-spacing:0.042px;left:560.00px;">GET[304] on default-grafana</div>
<div class="t" style="top:661.75px;font-size:12px;line-height:16px;color:rgb(204,204,220);letter-spacing:0.178px;right:1023.82px;">0.0260 ms</div>
<div class="t" style="top:661.75px;font-size:12px;line-height:16px;color:rgb(204,204,220);letter-spacing:0.178px;right:943.32px;">0.0405 ms</div>
<div class="t" style="top:431.80px;font-size:12px;line-height:16px;color:#6e9fff;letter-spacing:0.138px;right:1031.96px;-webkit-text-stroke:0.35px #6e9fff;">Mean</div>
<div class="t" style="top:431.80px;font-size:12px;line-height:16px;color:#6e9fff;letter-spacing:0.243px;right:943.26px;-webkit-text-stroke:0.35px #6e9fff;">Max</div>
<div class="t" style="top:447.00px;font-size:12px;line-height:16px;color:rgb(204,204,220);letter-spacing:0.113px;right:846.39px;">3K req/s</div>
<div class="t" style="top:480.00px;font-size:12px;line-height:16px;color:rgb(204,204,220);letter-spacing:0.078px;right:846.42px;">2.50K req/s</div>
<div class="t" style="top:512.00px;font-size:12px;line-height:16px;color:rgb(204,204,220);letter-spacing:0.113px;right:846.39px;">2K req/s</div>
<div class="t" style="top:545.00px;font-size:12px;line-height:16px;color:rgb(204,204,220);letter-spacing:0.078px;right:846.42px;">1.50K req/s</div>
<div class="t" style="top:578.00px;font-size:12px;line-height:16px;color:rgb(204,204,220);letter-spacing:0.113px;right:846.39px;">1K req/s</div>
<div class="t" style="top:611.00px;font-size:12px;line-height:16px;color:rgb(204,204,220);letter-spacing:0.168px;right:846.33px;">500 req/s</div>
<div class="t" style="top:644.00px;font-size:12px;line-height:16px;color:rgb(204,204,220);letter-spacing:0.199px;right:846.30px;">0 req/s</div>
<div class="t" style="top:659.10px;font-size:12px;line-height:16px;color:rgb(204,204,220);letter-spacing:-0.034px;left:1028.50px;width:69.86px;margin-left:-34.93px;text-align:center;text-indent:-0.034px;">15:15</div>
<div class="t" style="top:659.10px;font-size:12px;line-height:16px;color:rgb(204,204,220);letter-spacing:-0.034px;left:1081.50px;width:69.86px;margin-left:-34.93px;text-align:center;text-indent:-0.034px;">15:20</div>
<div class="t" style="top:659.10px;font-size:12px;line-height:16px;color:rgb(204,204,220);letter-spacing:-0.034px;left:1134.50px;width:69.86px;margin-left:-34.93px;text-align:center;text-indent:-0.034px;">15:25</div>
<div class="t" style="top:659.10px;font-size:12px;line-height:16px;color:rgb(204,204,220);letter-spacing:-0.034px;left:1187.50px;width:69.86px;margin-left:-34.93px;text-align:center;text-indent:-0.034px;">15:30</div>
<div class="t" style="top:659.10px;font-size:12px;line-height:16px;color:rgb(204,204,220);letter-spacing:-0.034px;left:1240.50px;width:69.86px;margin-left:-34.93px;text-align:center;text-indent:-0.034px;">15:35</div>
<div class="t" style="top:659.10px;font-size:12px;line-height:16px;color:rgb(204,204,220);letter-spacing:-0.034px;left:1293.50px;width:69.86px;margin-left:-34.93px;text-align:center;text-indent:-0.034px;">15:40</div>
<div class="t" style="top:659.10px;font-size:12px;line-height:16px;color:rgb(204,204,220);letter-spacing:-0.034px;left:1346.50px;width:69.86px;margin-left:-34.93px;text-align:center;text-indent:-0.034px;">15:45</div>
<div class="t" style="top:659.10px;font-size:12px;line-height:16px;color:rgb(204,204,220);letter-spacing:-0.034px;left:1399.50px;width:69.86px;margin-left:-34.93px;text-align:center;text-indent:-0.034px;">15:50</div>
<div class="t" style="top:454.75px;font-size:12px;line-height:16px;color:rgb(204,204,220);letter-spacing:0.149px;left:1479.00px;">[302] on default-prometheus</div>
<div class="t" style="top:454.75px;font-size:12px;line-height:16px;color:rgb(204,204,220);letter-spacing:0.203px;right:115.80px;">1.73K req/s</div>
<div class="t" style="top:454.75px;font-size:12px;line-height:16px;color:rgb(204,204,220);letter-spacing:0.203px;right:23.10px;">2.97K req/s</div>
<div class="t" style="top:477.75px;font-size:12px;line-height:16px;color:rgb(204,204,220);letter-spacing:0.164px;left:1479.00px;">[200] on default-whoami</div>
<div class="t" style="top:477.75px;font-size:12px;line-height:16px;color:rgb(204,204,220);letter-spacing:0.203px;right:115.80px;">1.61K req/s</div>
<div class="t" style="top:477.75px;font-size:12px;line-height:16px;color:rgb(204,204,220);letter-spacing:0.203px;right:23.10px;">2.65K req/s</div>
<div class="t" style="top:500.75px;font-size:12px;line-height:16px;color:rgb(204,204,220);letter-spacing:0.137px;left:1479.00px;">[302] on default-grafana</div>
<div class="t" style="top:500.75px;font-size:12px;line-height:16px;color:rgb(204,204,220);letter-spacing:0.293px;right:115.71px;">422 req/s</div>
<div class="t" style="top:500.75px;font-size:12px;line-height:16px;color:rgb(204,204,220);letter-spacing:0.293px;right:23.01px;">571 req/s</div>
<div class="t" style="top:523.75px;font-size:12px;line-height:16px;color:rgb(204,204,220);letter-spacing:0.137px;left:1479.00px;">[200] on default-grafana</div>
<div class="t" style="top:523.75px;font-size:12px;line-height:16px;color:rgb(204,204,220);letter-spacing:0.253px;right:115.75px;">0.279 req/s</div>
<div class="t" style="top:523.75px;font-size:12px;line-height:16px;color:rgb(204,204,220);letter-spacing:0.253px;right:23.05px;">0.644 req/s</div>
<div class="t" style="top:546.75px;font-size:12px;line-height:16px;color:rgb(204,204,220);letter-spacing:0.137px;left:1479.00px;">[499] on default-grafana</div>
<div class="t" style="top:546.75px;font-size:12px;line-height:16px;color:rgb(204,204,220);letter-spacing:0.248px;right:115.75px;">0.0129 req/s</div>
<div class="t" style="top:546.75px;font-size:12px;line-height:16px;color:rgb(204,204,220);letter-spacing:0.248px;right:23.05px;">0.0305 req/s</div>
<div class="t" style="top:569.75px;font-size:12px;line-height:16px;color:rgb(204,204,220);letter-spacing:0.149px;left:1479.00px;">[200] on default-prometheus</div>
<div class="t" style="top:569.75px;font-size:12px;line-height:16px;color:rgb(204,204,220);letter-spacing:0.248px;right:115.75px;">0.0109 req/s</div>
<div class="t" style="top:569.75px;font-size:12px;line-height:16px;color:rgb(204,204,220);letter-spacing:0.248px;right:23.05px;">0.0237 req/s</div>
<div class="t" style="top:592.75px;font-size:12px;line-height:16px;color:rgb(204,204,220);letter-spacing:0.137px;left:1479.00px;">[304] on default-grafana</div>
<div class="t" style="top:592.75px;font-size:12px;line-height:16px;color:rgb(204,204,220);letter-spacing:0.243px;right:115.76px;">0.00834 req/s</div>
<div class="t" style="top:592.75px;font-size:12px;line-height:16px;color:rgb(204,204,220);letter-spacing:0.248px;right:23.05px;">0.0136 req/s</div>
<div class="t" style="top:615.75px;font-size:12px;line-height:16px;color:rgb(204,204,220);letter-spacing:0.137px;left:1479.00px;">[400] on default-grafana</div>
<div class="t" style="top:615.75px;font-size:12px;line-height:16px;color:rgb(204,204,220);letter-spacing:0.243px;right:115.76px;">0.00339 req/s</div>
<div class="t" style="top:615.75px;font-size:12px;line-height:16px;color:rgb(204,204,220);letter-spacing:0.243px;right:23.06px;">0.00339 req/s</div>
<div class="t" style="top:431.80px;font-size:12px;line-height:16px;color:#6e9fff;letter-spacing:0.138px;right:123.96px;-webkit-text-stroke:0.35px #6e9fff;">Mean</div>
<div class="t" style="top:431.80px;font-size:12px;line-height:16px;color:#6e9fff;letter-spacing:0.243px;right:23.06px;-webkit-text-stroke:0.35px #6e9fff;">Max</div>
<div class="b" style="left:528px;top:674px;width:384px;height:8px;background:#181b1f"></div>
</body></html>
